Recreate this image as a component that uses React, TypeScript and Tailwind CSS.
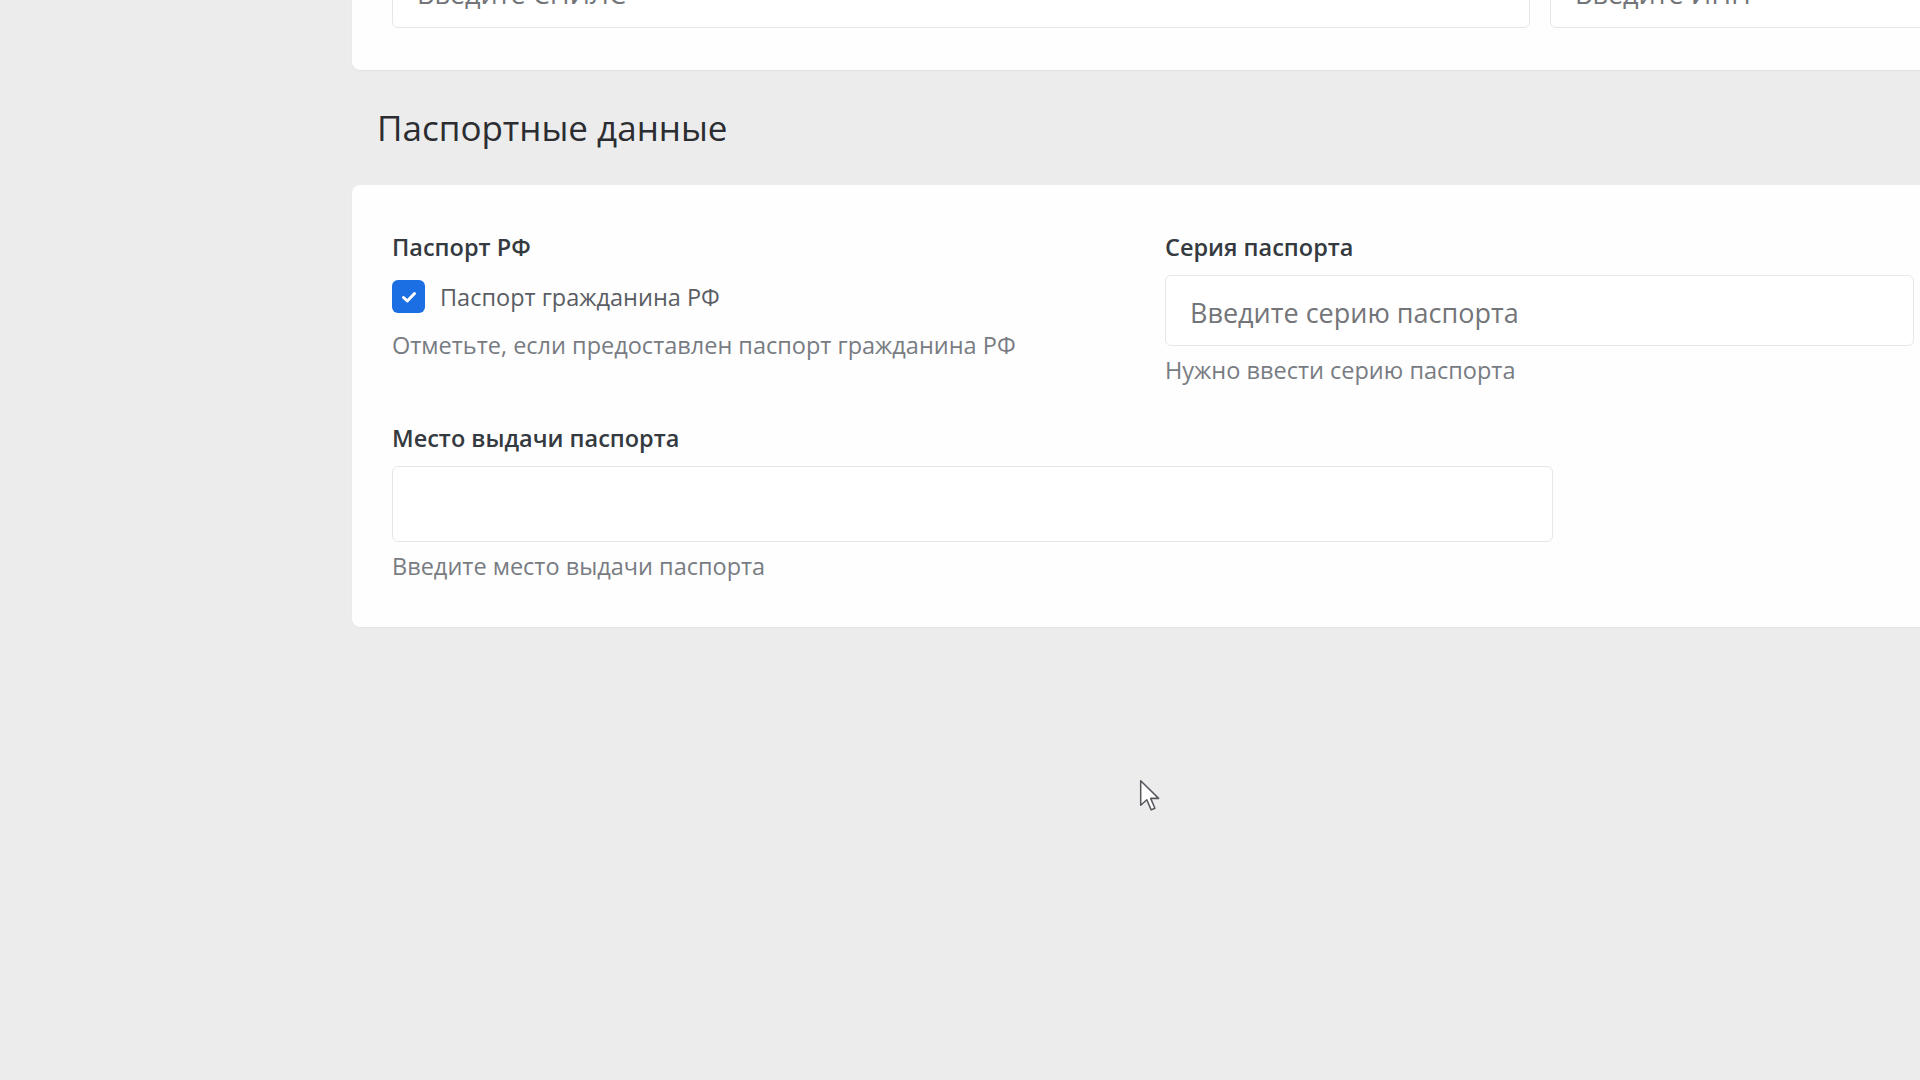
import React from "react";

const font = { fontFamily: '"Open Sans", "Noto Sans", sans-serif' };

function Label({ children }: { children: React.ReactNode }) {
  return <div className="text-[23.5px] leading-[30px] font-semibold text-[#343a40]">{children}</div>;
}

function Hint({ children, className = "" }: { children: React.ReactNode; className?: string }) {
  return <div className={`text-[23.5px] leading-[30px] text-[#787c82] ${className}`}>{children}</div>;
}

function Cursor() {
  return (
    <svg className="absolute left-[1139px] top-[779px] w-[22px] h-[34px]" viewBox="0 0 13 20" fill="none">
      <path
        d="M1 1 L1 15.5 L4.6 12.2 L7.2 18.2 L9.4 17.2 L6.9 11.4 L11.6 11.4 Z"
        fill="#ffffff"
        stroke="#56585e"
        strokeWidth="0.9"
        strokeLinejoin="round"
      />
    </svg>
  );
}

export default function App() {
  return (
    <div className="relative w-[1920px] h-[1080px] overflow-hidden bg-[#ececed]" style={font}>
      <div className="pl-[352px]">
        {/* Previous section (scrolled off) */}
        <div className="mt-[-84px] w-[1620px] rounded-lg bg-[#fefefe] shadow-[0_1px_2px_rgba(0,0,0,0.04)] px-10 pt-10 pb-[42px]">
          <div className="flex gap-5">
            <div className="w-[1138px] h-[72px] rounded-md border border-[#e6e7ea] bg-white flex items-center px-6 pt-1">
              <span className="text-[27px] text-[#737579]">Введите СНИЛС</span>
            </div>
            <div className="flex-1 h-[72px] rounded-md border border-[#e6e7ea] bg-white flex items-center px-6 pt-1">
              <span className="text-[27px] text-[#737579]">Введите ИНН</span>
            </div>
          </div>
        </div>

        {/* Паспортные данные */}
        <h3 className="mt-[37px] ml-[25px] text-[35px] leading-[42px] font-normal text-[#2b2d31]">
          Паспортные данные
        </h3>

        <div className="mt-[36px] w-[1620px] rounded-lg bg-[#fefefe] shadow-[0_1px_2px_rgba(0,0,0,0.04)] px-10 pt-[47px] pb-[46px]">
          <div className="flex">
            <div className="w-[773px]">
              <Label>Паспорт РФ</Label>
              <label className="mt-[18px] flex items-center gap-[15px]">
                <span className="w-[33px] h-[33px] rounded-[6px] bg-[#1b6fe3] flex items-center justify-center">
                  <svg className="w-[20px] h-[20px]" viewBox="0 0 20 20" fill="none">
                    <path d="M4.5 10.5 L8.3 14 L15.5 6.5" stroke="#ffffff" strokeWidth="3" strokeLinecap="round" strokeLinejoin="round" />
                  </svg>
                </span>
                <span className="text-[23.5px] leading-[30px] text-[#5a5d63]">Паспорт гражданина РФ</span>
              </label>
              <Hint className="mt-[17px]">Отметьте, если предоставлен паспорт гражданина РФ</Hint>
            </div>
            <div className="w-[749px]">
              <Label>Серия паспорта</Label>
              <div className="mt-[13px] h-[71px] rounded-md border border-[#e6e7ea] bg-white flex items-center px-6 pt-[6px]">
                <span className="text-[27px] text-[#737579]">Введите серию паспорта</span>
              </div>
              <Hint className="mt-[9px]">Нужно ввести серию паспорта</Hint>
            </div>
          </div>

          <div className="mt-[38px]">
            <Label>Место выдачи паспорта</Label>
            <div className="mt-[13px] w-[1161px] h-[76px] rounded-md border border-[#e6e7ea] bg-white" />
            <Hint className="mt-[9px]">Введите место выдачи паспорта</Hint>
          </div>
        </div>
      </div>

      <Cursor />
    </div>
  );
}
